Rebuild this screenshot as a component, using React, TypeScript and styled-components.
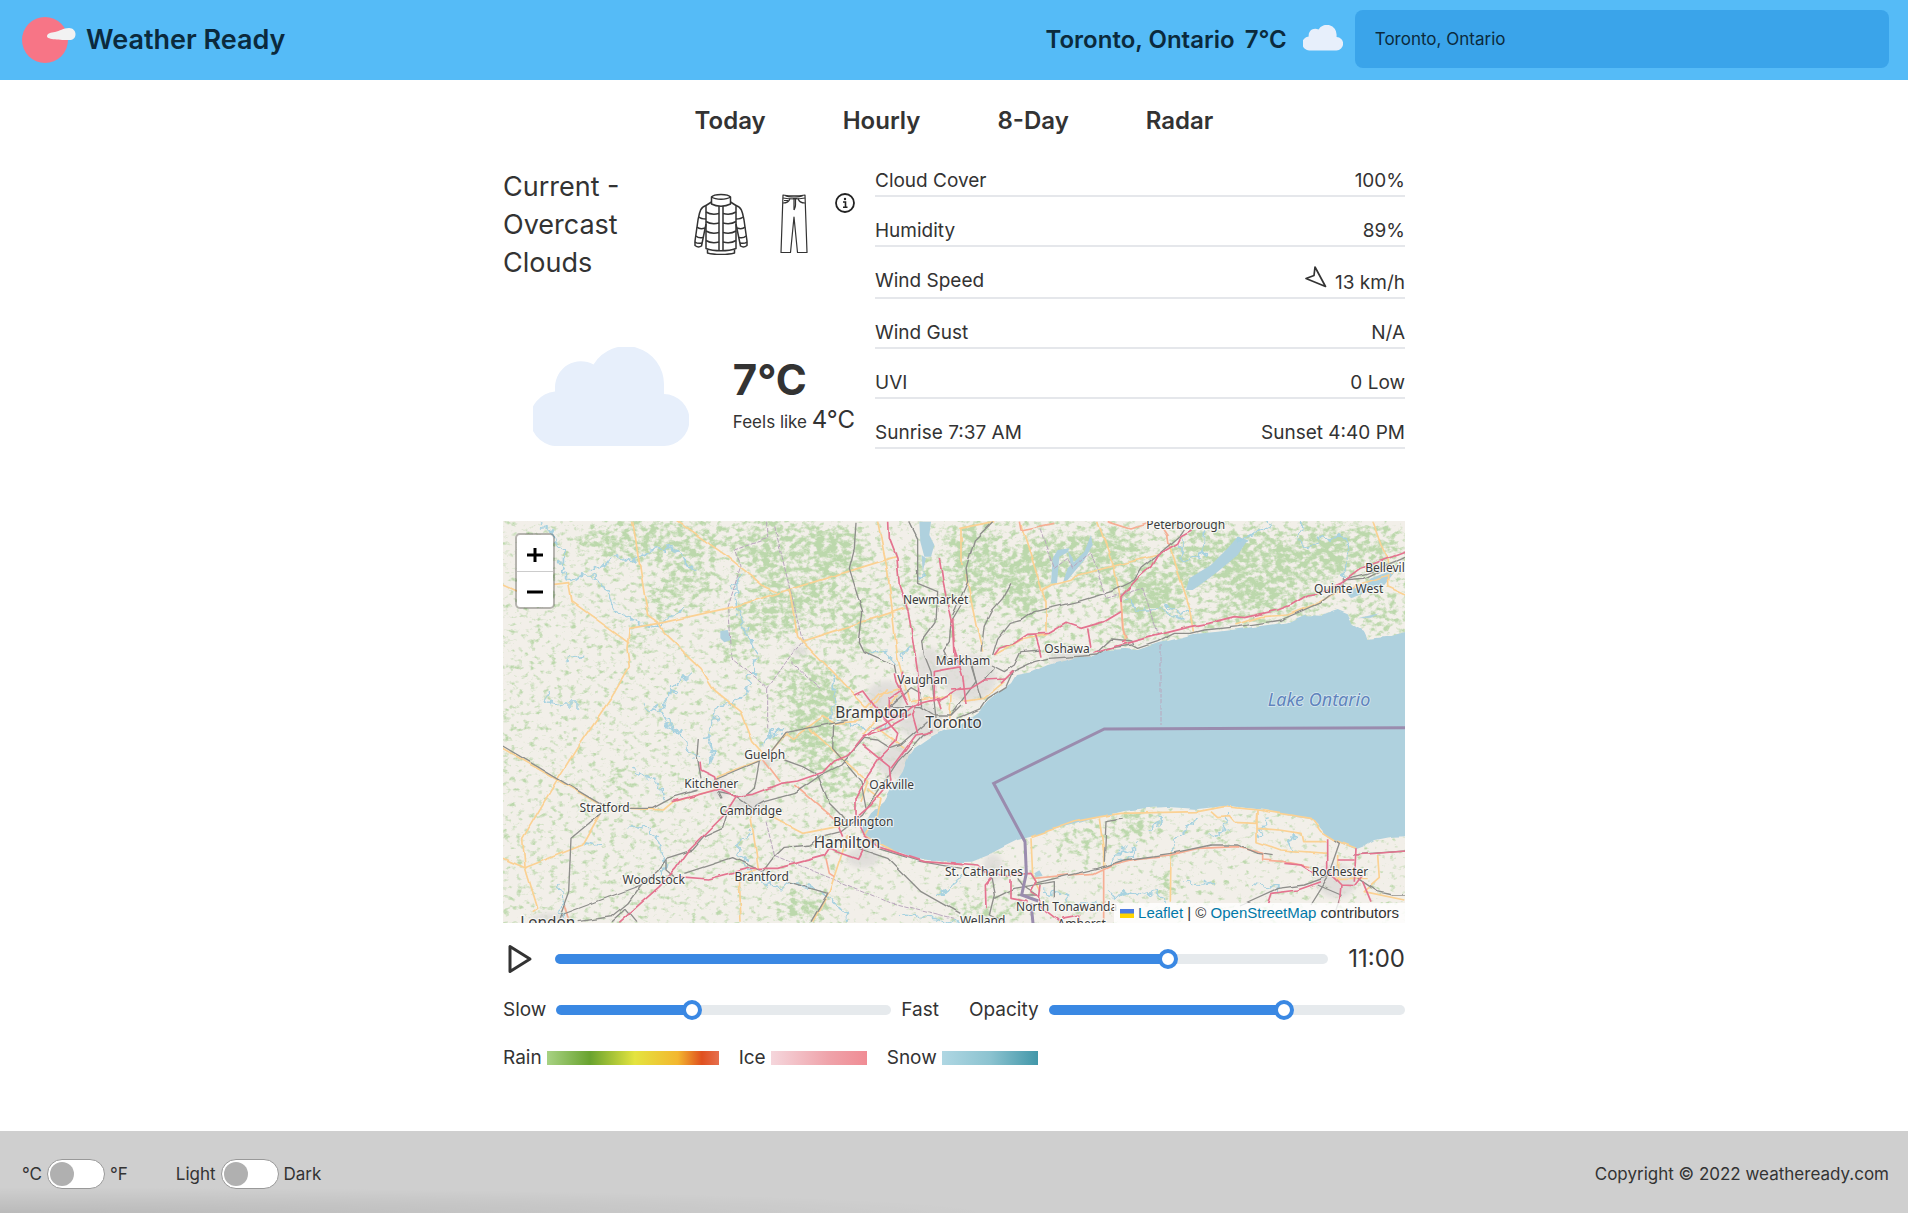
import React, { useState } from 'react';
import styled, { createGlobalStyle } from 'styled-components';

const GlobalStyle = createGlobalStyle`
  *, *::before, *::after { box-sizing: border-box; }
  body {
    margin: 0;
    background: #fff;
    color: #333;
    font-family: Inter, Roboto, "Liberation Sans", sans-serif;
    font-size: 19px;
    line-height: 24px;
  }
`;

const Page = styled.div`
  display: flex;
  flex-direction: column;
  min-height: 100vh;
`;

/* ---------- header ---------- */

const Header = styled.header`
  display: flex;
  align-items: center;
  justify-content: space-between;
  height: 80px;
  padding: 0 19px 0 20px;
  background: #55bbf7;
  color: #0b2a3d;
`;

const Brand = styled.a`
  display: flex;
  align-items: center;
  gap: 9px;
  color: inherit;
  font-size: 27px;
  font-weight: 600;
  line-height: 32px;
  text-decoration: none;
`;

const HeaderSide = styled.div`
  display: flex;
  align-items: center;
  gap: 10px;
`;

const HeaderCloud = styled.span`
  display: flex;
  padding: 0 2px 4px 6px;
`;

const Place = styled.span`
  font-size: 24px;
  font-weight: 600;
  line-height: 32px;
`;

const Search = styled.input`
  width: 28vw;
  height: 58px;
  margin-bottom: 2px;
  padding: 0 20px;
  border: 0;
  border-radius: 8px;
  background: #3aa4ea;
  color: #0b2a3d;
  font: inherit;
  font-size: 17px;
`;

/* ---------- main ---------- */

const Main = styled.main`
  flex: 1;
  width: 100%;
  max-width: 902px;
  margin: 0 auto;
`;

const Nav = styled.nav`
  display: flex;
  justify-content: center;
  gap: 77px;
  padding: 25px 0 10px;
`;

const NavLink = styled.a`
  color: inherit;
  font-size: 24px;
  font-weight: 600;
  line-height: 32px;
  text-decoration: none;
`;

const Summary = styled.section`
  display: grid;
  grid-template-columns: 352fr 530fr;
  gap: 20px;
  padding-bottom: 72px;
`;

const Current = styled.div`
  display: flex;
  flex-direction: column;
  justify-content: space-between;
  padding-top: 21px;
`;

const CurrentTop = styled.div`
  display: flex;
  align-items: flex-start;
  justify-content: space-between;
`;

const Condition = styled.h1`
  width: 150px;
  margin: 0;
  font-size: 27px;
  font-weight: 400;
  line-height: 38px;
`;

const Outfit = styled.div`
  display: flex;
  align-items: flex-start;
  gap: 27px;
  padding-top: 25px;
`;

const ClothingIcons = styled.div`
  display: flex;
  gap: 32px;
`;

const InfoButton = styled.button`
  display: flex;
  padding: 0;
  border: 0;
  background: none;
  color: inherit;
  cursor: pointer;
`;

const CurrentBottom = styled.div`
  display: flex;
  align-items: flex-end;
  justify-content: space-between;
  padding: 0 0 3px 30px;
`;

const Temps = styled.div`
  padding-bottom: 8px;
`;

const Temp = styled.div`
  font-size: 42px;
  font-weight: 700;
  line-height: 48px;
`;

const Feels = styled.div`
  font-size: 17px;
  line-height: 32px;
  white-space: nowrap;
`;

const FeelsTemp = styled.span`
  font-size: 24px;
`;

const Details = styled.table`
  width: 100%;
  border-collapse: collapse;
`;

const DetailRow = styled.tr`
  border-bottom: 2px solid #e5e7eb;
`;

const DetailName = styled.th`
  padding: 22px 0 2px;
  font-weight: 400;
  text-align: left;
  vertical-align: top;
`;

const DetailValue = styled.td`
  padding: 22px 0 2px;
  text-align: right;
`;

const Wind = styled.span`
  display: flex;
  align-items: flex-end;
  justify-content: flex-end;
  gap: 8px;
  height: 26px;
`;

const WindArrow = styled.svg`
  align-self: flex-start;
  margin-top: -3px;
`;

/* ---------- map ---------- */

const MapFrame = styled.section`
  position: relative;
  overflow: hidden;
  background: #f2efe9;
`;

const MapDrawing = styled.svg`
  display: block;
  width: 100%;
  height: auto;
`;

const ZoomBox = styled.div`
  position: absolute;
  top: 12px;
  left: 12px;
  display: flex;
  flex-direction: column;
  width: 40px;
  border: 2px solid rgba(0, 0, 0, 0.25);
  border-radius: 5px;
  background: #fff;
  background-clip: padding-box;
`;

const ZoomButton = styled.button`
  display: flex;
  align-items: center;
  justify-content: center;
  height: 36px;
  padding: 4px 0 0;
  border: 0;
  background: none;
  color: #000;
  cursor: pointer;
  & + & { border-top: 1px solid #ccc; }
`;

const Attribution = styled.div`
  position: absolute;
  right: 0;
  bottom: 0;
  display: flex;
  align-items: center;
  gap: 4px;
  padding: 0 6px;
  background: rgba(255, 255, 255, 0.8);
  font-family: "Liberation Sans", Arial, sans-serif;
  font-size: 15px;
  line-height: 20px;
  a { color: #0078a8; text-decoration: none; }
`;

/* ---------- controls ---------- */

const Controls = styled.section`
  display: flex;
  flex-direction: column;
  gap: 24px;
  padding: 21px 0 60px;
`;

const ControlRow = styled.div<{ $gap: number }>`
  display: flex;
  align-items: center;
  gap: ${(p) => p.$gap}px;
`;

const PlayButton = styled.button`
  display: flex;
  width: 32px;
  padding: 0 0 0 4px;
  border: 0;
  background: none;
  color: inherit;
  cursor: pointer;
`;

const Clock = styled.output`
  font-size: 24px;
  line-height: 30px;
`;

const SliderGroup = styled.div`
  flex: 1 1 0;
  display: flex;
  align-items: center;
  gap: 10px;
`;

const Range = styled.input<{ $fill: number }>`
  flex: 1;
  min-width: 0;
  height: 20px;
  margin: 0;
  appearance: none;
  background: transparent;
  cursor: pointer;
  &::-webkit-slider-runnable-track {
    height: 10px;
    border-radius: 5px;
    background: linear-gradient(
      to right,
      #3a88e3 ${(p) => p.$fill}%,
      #e6eaed ${(p) => p.$fill}%
    );
  }
  &::-webkit-slider-thumb {
    appearance: none;
    width: 20px;
    height: 20px;
    margin-top: -5px;
    border: 4px solid #3a88e3;
    border-radius: 50%;
    background: #fff;
  }
`;

const Legend = styled.div`
  display: flex;
  gap: 20px;
`;

const LegendItem = styled.span`
  display: flex;
  align-items: center;
  gap: 5px;
`;

const Swatch = styled.span<{ $width: number; $scale: string }>`
  width: ${(p) => p.$width}px;
  height: 14px;
  background: linear-gradient(to right, ${(p) => p.$scale});
`;

/* ---------- footer ---------- */

const Footer = styled.footer`
  display: flex;
  align-items: center;
  justify-content: space-between;
  height: 82px;
  padding: 3px 19px 0 22px;
  background:
    radial-gradient(ellipse 1000px 26px at 0 100%, rgba(0, 0, 0, 0.1), transparent),
    #cfcfcf;
  font-size: 17px;
`;

const Toggles = styled.div`
  display: flex;
  gap: 48px;
`;

const ToggleLabel = styled.label`
  display: flex;
  align-items: center;
  gap: 5px;
  cursor: pointer;
`;

const Toggle = styled.input`
  appearance: none;
  width: 58px;
  height: 30px;
  margin: 0;
  padding: 2px;
  border: 1px solid #999;
  border-radius: 15px;
  background: #fff;
  cursor: pointer;
  &::before {
    content: '';
    display: block;
    width: 24px;
    height: 24px;
    border-radius: 50%;
    background: #b0b0b0;
  }
  &:checked::before { margin-left: auto; }
`;

/* ---------- icons ---------- */

const Logo = () => (
  <svg width="57" height="50" viewBox="0 0 57 50" aria-hidden="true">
    <circle cx="25" cy="25" r="23" fill="#f77586" />
    <path
      d="M27 21.5C27 18 31 17.500 35 17C40 16 43 13 49 13C53 13 55.500 16 55.500 19C55.500 23 53 25 49.500 25C41 25 27 24.500 27 21.500Z"
      fill="#f2f2f2"
    />
  </svg>
);

const CloudIcon = ({ width }: { width: number }) => (
  <svg width={width} viewBox="0 0 156 99" aria-hidden="true">
    <path
      d="M27 99A27 27 0 0 1 22 44.500V40A26 26 0 0 1 60.500 17.500A38 38 0 0 1 131 38V47A26 26 0 0 1 130 99Z"
      fill="#e7effb"
    />
  </svg>
);

const JacketIcon = () => (
  <svg width="54" height="62" viewBox="0 0 54 62" fill="none" stroke="#333" strokeWidth="1.5" strokeLinejoin="round" aria-hidden="true">
    <path d="M17.500 4C20 0.500 34 0.500 36.500 4V11C31 14 23 14 17.500 11Z" />
    <path d="M17.500 4C22 7 32 7 36.500 4" />
    <path d="M17.500 9L12 12.500V55.500C20 58.500 34 58.500 42 55.500V12.500L36.500 9" />
    <path d="M13.500 56.500V60C20 62 34 62 40.500 60V56.500" />
    <path d="M12 12.500C6 14 5.500 20 4 27L1 48V52.500C3 54 6 54 7.500 53L12 31" />
    <path d="M42 12.500C48 14 48.500 20 50 27L53 48V52.500C51 54 48 54 46.500 53L42 31" />
    <path d="M1 49C3 50.500 6 50.500 8 50M2 43C4 45 7 45 9 44.500M3 34C5 36 8 36 11 35M5 24C7 26 9 26 12 26" />
    <path d="M53 49C51 50.500 48 50.500 46 50M52 43C50 45 47 45 45 44.500M51 34C49 36 46 36 43 35M49 24C47 26 45 26 42 26" />
    <path d="M25 13V57M29 13V57" />
    <path d="M12 19C16 21.500 21 21.500 25 20.500M12 28.500C16 31 21 31 25 30M12 38C16 40.500 21 40.500 25 39.500M12 47.500C16 50 21 50 25 49" />
    <path d="M42 19C38 21.500 33 21.500 29 20.500M42 28.500C38 31 33 31 29 30M42 38C38 40.500 33 40.500 29 39.500M42 47.500C38 50 33 50 29 49" />
  </svg>
);

const PantsIcon = () => (
  <svg width="28" height="62" viewBox="0 0 28 62" fill="none" stroke="#333" strokeWidth="1.2" strokeLinejoin="round" aria-hidden="true">
    <path d="M3 2C9 3 19 3 25 2L27 59.500H17.500L14 24L10.500 59.500H1L3 2Z" />
    <path d="M3 5C9 6 19 6 25 5M5 2.500C9 4.500 19 4.500 23 2.500" />
    <path d="M3 10C7 10 9 9 10 5.500M25 10C21 10 19 9 18 5.500M14 6V17M15.500 6V12C15.500 15 14.500 16 14 17M4 7.500H8M13 5.500H17" />
  </svg>
);

const InfoIcon = () => (
  <svg width="20" height="20" viewBox="0 0 20 20" aria-hidden="true">
    <circle cx="10" cy="10" r="9" fill="none" stroke="#222" strokeWidth="1.8" />
    <path d="M8 9H10.500V14M8 14.300H12.500" fill="none" stroke="#222" strokeWidth="1.6" />
    <circle cx="10" cy="6" r="1.200" fill="#222" />
  </svg>
);

/* ---------- map data ---------- */

type Line = [kind: keyof typeof lineStyle, d: string];
type Town = [name: string, x: number, y: number, size?: number];

const lineStyle = {
  river: { stroke: '#a8d2e0', strokeWidth: 5 },
  primary: { stroke: '#fbd193', strokeWidth: 5 },
  trunk: { stroke: '#f7ae94', strokeWidth: 5 },
  rail: { stroke: '#8e8e8b', strokeWidth: 4 },
  motorway: { stroke: '#e4738f', strokeWidth: 5 },
  county: { stroke: '#b9a6bd', strokeWidth: 3, strokeDasharray: '14 4' },
};

const westLines: Line[] = [
  ['river', 'M120 25L160 60L185 110L180 150L210 205L240 180L275 180L290 210L320 225L330 260L360 300L430 330L460 345L500 310L550 280'],
  ['river', 'M275 160L310 155L340 120L370 130L400 135L440 105L490 95L540 115L555 150L585 158'],
  ['river', 'M725 170L700 210L708 290L740 360L770 410L755 470L740 520L720 550L650 575L640 620L620 660L635 710L620 750'],
  ['river', 'M572 470L540 500L500 540L480 590L510 640L550 665L560 710L600 730'],
  ['river', 'M480 590L430 575M135 535L150 565L190 570L230 570M200 430L250 422'],
  ['river', 'M398 755L420 785L460 795L490 850M385 935L440 945L470 980L500 1050L480 1080'],
  ['river', 'M1250 190L1270 170M1195 430L1230 390M1105 415L1150 410L1190 450'],
  ['river', 'M1000 480L1000 560L985 610M850 640L800 660L780 690M1010 620L1080 635L1120 640L1180 640'],
  ['river', 'M760 950L720 970L715 1010L740 1060L800 1110L840 1115L900 1110L980 1140L1040 1210'],
  ['river', 'M170 1110L190 1160L180 1200M250 980L300 990M1200 1200L1260 1205L1380 1225M1380 1090L1310 1140'],
  ['county', 'M800 20L800 70L700 105L720 150L680 280L690 430L780 500L800 520L870 420L905 380M800 520L800 640M870 440L960 520M905 380L820 30M795 920L820 1020L1160 1160L1360 1210'],
  ['primary', 'M395 20L440 300L475 325L385 340L378 400L385 455L330 550L240 680L165 800L65 970L72 1055L110 1180L95 1190'],
  ['primary', 'M5 210L45 228M160 208L203 203L213 260L385 385M475 325L700 275L860 225L1040 170L1185 125'],
  ['primary', 'M530 20L680 125L790 215L825 230M475 325L490 355L600 460L640 525L720 590L755 680L790 720'],
  ['primary', 'M865 225L890 365L1060 540L1100 580M900 380L1210 280M1130 20L1160 170L1190 430L1225 560'],
  ['primary', 'M5 1030L72 1058L245 990L295 900M5 700L290 865M390 880L490 885L520 860L640 825L650 785L780 735'],
  ['primary', 'M780 890L905 955L1010 935L1030 920M750 905L772 1060L715 1090L720 1220M1040 960L985 1130L935 1220'],
  ['primary', 'M810 710L855 655L875 670L965 605L1000 625L1060 620L1130 540L1200 520M925 640L1100 800L1080 860M1100 820L1140 850L1130 900L1090 960L1200 1020'],
  ['primary', 'M1085 660L1190 540M1130 640L1210 700M1110 580L1160 520M1230 560L1350 540L1345 640'],
  ['trunk', 'M785 735L835 800M880 810L960 880L1020 930M975 1030L985 1075L1000 1085M190 1170L205 1222'],
  ['rail', 'M5 693L300 868M300 895L210 970L203 1130L170 1220M385 880L455 880L520 845L590 825M592 672L588 720L600 790'],
  ['rail', 'M640 795L775 738L760 820L730 845M660 850L650 830L700 840L755 880L790 860L880 835L960 780L1020 750L1090 670L1130 675L1170 700L1200 690L1280 620'],
  ['rail', 'M850 735L905 755L950 780L985 865L1020 900L1035 920M810 710L855 652L995 625L1040 615M998 630L995 700L1080 800L1095 880'],
  ['rail', 'M1065 20L1060 100L1045 160L1085 290L1075 380L1090 410L1180 450L1185 475M1225 20L1250 70L1250 205L1310 230L1305 320L1265 375L1270 420L1290 470L1305 610'],
  ['rail', 'M1380 270L1350 320L1345 380L1325 410L1345 450M1165 575L1260 575L1300 600L1350 600L1380 570M1165 575L1230 518L1260 535L1265 575'],
  ['rail', 'M180 1200L420 1110L470 1065L495 1030L575 1005L610 965L665 940L680 890M230 1220L330 1205L380 1165L420 1110M550 1075L695 1028L785 1070L815 1030L850 997L930 990L960 965L1020 950L1085 900L1190 740L1265 660L1295 645'],
  ['rail', 'M495 1030L495 1065L520 1085M1070 1000L1160 1030L1260 1130L1375 1195M860 1100L980 1135L930 1220M1130 1000L1260 1040L1380 1060M330 1220L375 1180L408 1220'],
  ['motorway', 'M1163 20L1165 70L1188 130L1195 210L1222 290L1250 470L1255 570M1315 130L1325 195L1355 340L1360 440'],
  ['motorway', 'M355 1222L475 1115L525 1060L565 1005L610 960L670 900L705 845L755 838L840 805L890 798L970 770L1000 738L1045 720L1085 670L1130 635L1210 595L1240 570L1320 550L1380 515'],
  ['motorway', 'M515 860L655 822L705 845M655 822L640 785L600 765L597 740M530 1085L620 1092L740 1060L830 1060L970 1022L985 1000L1070 1030L1085 1000'],
  ['motorway', 'M1060 540L1085 528L1120 575L1190 655L1185 680L1130 735L1100 780L1065 850L1065 905L1090 960L1130 995L1270 1040L1380 1048'],
  ['motorway', 'M1085 690L1165 755L1170 800L1110 870L1070 905M1170 760L1245 660L1295 650M1250 655L1235 600L1245 570M1205 470L1195 530L1165 550L1165 600L1220 605M1300 560L1300 470L1380 455'],
  ['motorway', 'M1085 665L1160 640L1230 600M1310 545L1320 580M1180 475L1185 500L1220 570M1010 930L1025 965'],
];

const eastLines: Line[] = [
  ['river', 'M1050 20L1045 80L1070 100L1120 65L1180 70L1190 120L1175 180M760 55L760 115L690 135L690 60M960 20L900 60L860 80'],
  ['river', 'M520 255L560 285L620 285L700 312M640 260L655 285L715 295M700 1100L740 1110L795 1100M615 910L640 915L590 950M740 910L690 960L660 970L660 1020M830 890L820 950L770 965M920 960L960 905M1030 950L1010 1005'],
  ['river', 'M480 1050L500 1010L555 995L545 1025L510 1040M465 1130L490 1145L530 1130L580 1140L620 1130L640 1160M270 1130L330 1140L370 1170L450 1160M910 1110L990 1120'],
  ['county', 'M270 40L310 160L350 130L365 160L420 110L465 250L575 220L620 360M630 390V630'],
  ['primary', 'M45 180L75 330L95 410M30 150L30 40L130 20M210 30L265 200L285 260L285 350M440 20L490 160L510 260L520 380M275 225L300 210L365 195L380 180L620 120'],
  ['primary', 'M655 90L720 290L730 350M130 420L210 375L290 358M850 330L930 305L1010 300L1100 265L1150 235L1310 180L1310 215L1365 240M1265 20L1290 90L1310 130L1320 180'],
  ['primary', 'M240 965L300 945L370 920L450 905L510 895L740 890L820 875L920 885L1080 910L1110 950L1150 975L1215 1000M780 890L800 908L835 905L850 922L915 925L918 885L918 980L990 1005L1130 1015M918 940L985 945L1050 955L1055 980L1130 980'],
  ['primary', 'M240 970L245 1080L270 1130M445 910L458 1010L458 1060M660 1010L658 1160M30 560L100 550L160 500M1280 1020L1285 1090L1240 1130L1360 1155M1150 1090L1250 1090M1160 1020L1160 1100'],
  ['trunk', 'M205 20L210 45L310 25M470 20L540 42L590 25M630 30L650 60L655 95M510 250L515 340L525 370M250 1090L350 1080L430 1075L480 1050L560 1030L660 1020L740 1000L860 995L935 1015L935 1035L1000 1040L1075 1055M458 1060L458 1222'],
  ['rail', 'M125 20L70 75L45 160L50 200L5 300M180 205L155 250L120 290L100 330L90 410M125 420L140 370L175 325L215 315L250 290L380 260L480 230L550 195L570 160L620 120L690 60L700 45'],
  ['rail', 'M0 600L30 560L75 500L60 440M20 610L90 580L110 550L165 515L185 470L250 440L290 430L440 420L470 400L540 390L560 400L620 380L670 355L720 355L760 345L860 335L990 315L1110 262L1150 230L1190 190L1250 175L1365 125'],
  ['rail', 'M440 410L480 372L540 378L545 390M120 450L160 470L190 450L210 410L270 405M95 500L130 460M60 450L90 550M1175 195L1240 190L1300 160'],
  ['rail', 'M250 1105L440 1060L520 1035L660 1015L780 990L860 990L920 1015L965 1022M460 1040L465 920L512 912M870 1170L980 1120L1060 1110L1130 1085L1165 985L1150 975M1220 1090L1280 1130L1325 1140L1365 1140M1130 1090L1080 1170M1210 1020L1260 1015L1365 1008'],
  ['rail', 'M120 1090L130 1140L115 1200L160 1222M130 1150L190 1120L310 1100L310 1150M200 1090L215 1110L260 1140L200 1140M1100 1110L1170 1140L1150 1200'],
  ['motorway', 'M5 310L10 400L35 480L45 570M0 525L60 520L100 495L165 492M130 420L145 400L190 385L230 358L295 355L345 325L390 340L460 320L510 290'],
  ['motorway', 'M430 415L490 395L600 365L720 335L770 325L850 305L880 308L980 285L1020 270L1070 240L1100 235L1170 205L1230 160L1365 110M510 380L522 375M253 358L265 400L270 425M410 340L420 400M722 48L690 65L680 85L620 120L600 155L555 195L510 245L510 260M150 505L185 470'],
  ['motorway', 'M0 1043L80 1050L100 1070L170 1080L240 1075L255 1100L240 1130L265 1145L275 1180L330 1222M105 1180L103 1110L120 1090M180 1090L180 1150L230 1160M270 1110L265 1150M390 1222L385 1200L330 1210'],
  ['motorway', 'M1130 970L1130 1070L1170 1110L1210 1112L1235 1080M1215 1000L1210 1100M1090 1075L1050 1050L1000 1045M950 1165L960 1135L1040 1125L1110 1100M1210 1020L1365 1008M1235 1100L1260 1160M1160 1035L1210 1035M1170 1110L1165 1165'],
];

const westTowns: Town[] = [
  ['Newmarket', 1304, 268],
  ['Markham', 1386, 451],
  ['Vaughan', 1264, 508],
  ['Brampton', 1112, 610, 46],
  ['Toronto', 1358, 638, 46],
  ['Guelph', 791, 733],
  ['Kitchener', 631, 818],
  ['Oakville', 1172, 822],
  ['Stratford', 311, 892],
  ['Cambridge', 749, 901],
  ['Burlington', 1087, 933],
  ['Hamilton', 1038, 998, 46],
  ['Woodstock', 458, 1108],
  ['Brantford', 782, 1098],
  ['London', 140, 1238, 46],
];

const eastTowns: Town[] = [
  ['Peterborough', 704, 43],
  ['Bellevil', 1302, 172],
  ['Quinte West', 1193, 234],
  ['Oshawa', 348, 414],
  ['St. Catharines', 99, 1083],
  ['Rochester', 1167, 1082],
  ['North Tonawanda', 347, 1188],
  ['Welland', 95, 1231],
  ['Amherst', 392, 1240],
];

/* cx, cy, rx, ry, density */
const forests: [number, number, number, number, number][] = [
  [500, 600, 900, 700, 0.08], [2000, 200, 900, 260, 0.12],
  [450, 60, 230, 60, 0.42], [560, 180, 90, 70, 0.35], [840, 60, 160, 60, 0.4], [1010, 90, 90, 70, 0.5],
  [780, 120, 60, 40, 0.45], [880, 190, 130, 60, 0.38], [790, 290, 110, 60, 0.42], [1000, 260, 160, 70, 0.25],
  [1050, 350, 60, 50, 0.42], [690, 370, 40, 50, 0.42], [900, 480, 90, 90, 0.28], [930, 560, 80, 90, 0.3],
  [960, 680, 90, 90, 0.36], [900, 640, 60, 60, 0.3], [340, 780, 30, 30, 0.45], [900, 1160, 80, 40, 0.45],
  [470, 250, 60, 60, 0.25], [380, 360, 60, 40, 0.2], [1000, 800, 70, 60, 0.25], [1000, 500, 50, 70, 0.3],
  [1370, 100, 40, 160, 0.4], [1440, 120, 60, 120, 0.4], [1560, 180, 70, 110, 0.5], [1640, 100, 80, 60, 0.4],
  [1750, 130, 90, 80, 0.25], [1850, 120, 100, 90, 0.3], [1930, 240, 90, 60, 0.5], [2000, 180, 90, 70, 0.3],
  [1790, 60, 100, 40, 0.35], [2120, 110, 110, 90, 0.38], [2260, 140, 110, 110, 0.42], [2420, 110, 110, 80, 0.42],
  [2560, 80, 140, 70, 0.4], [2300, 240, 160, 50, 0.3], [2150, 290, 100, 40, 0.25], [1900, 330, 120, 40, 0.25],
  [2640, 280, 90, 60, 0.25], [1600, 380, 120, 30, 0.15], [1900, 910, 70, 50, 0.45], [1740, 960, 90, 60, 0.3],
  [1990, 1090, 45, 30, 0.5], [2150, 950, 60, 40, 0.2], [1450, 1170, 120, 50, 0.3],
  [1240, 170, 30, 80, 0.35], [700, 990, 80, 50, 0.1],
];

const urban: [number, number, number, number][] = [
  [1150, 530, 60, 50], [1280, 440, 40, 60], [1400, 470, 80, 70], [1250, 600, 70, 50], [1700, 410, 60, 30],
  [740, 850, 50, 30], [650, 800, 30, 30], [790, 715, 26, 20], [1080, 1010, 50, 30], [140, 1200, 60, 24],
  [1180, 720, 60, 50], [2500, 1080, 60, 50], [890, 390, 24, 16], [1470, 1040, 30, 40],
];

const Lines = ({ lines }: { lines: Line[] }) => (
  <g fill="none" strokeLinejoin="round">
    {lines.map(([kind, d]) => (
      <path key={d} d={d} {...lineStyle[kind]} filter={kind === 'river' ? 'url(#meander)' : 'url(#bend)'} />
    ))}
  </g>
);

const Towns = ({ towns }: { towns: Town[] }) => (
  <g
    fontFamily='"Noto Sans", sans-serif'
    textAnchor="middle"
    fill="#3c3c3c"
    stroke="rgba(255,255,255,0.7)"
    strokeWidth="7"
    paintOrder="stroke"
    strokeLinejoin="round"
  >
    {towns.map(([name, x, y, size = 36]) => (
      <text key={name} x={x} y={y} fontSize={size}>{name}</text>
    ))}
  </g>
);

const shore =
  'M-265 935L-240 895L-200 860L-175 815L-145 770L-130 730L-110 700L-60 665L-20 645L20 640L50 615L90 585L110 560L150 525L180 505L195 480L240 472L290 450L340 437L380 426L430 425L470 405L520 402L560 405L620 385L680 370L730 357L800 350L880 340L950 330L1010 322L1060 300L1110 302L1160 285L1190 298L1205 330L1240 350L1250 372L1310 365L1420 335V962L1320 965L1270 975L1235 995L1215 1003L1170 985L1130 965L1100 930L1080 912L1030 905L940 885L830 872L740 882L650 876L580 880L520 888L450 905L380 925L300 945L240 965L200 975L150 1000L110 1020L60 1040L0 1042L-70 1035L-130 1020L-190 1000L-240 985L-265 960Z';

const RadarMap = () => (
  <MapDrawing viewBox="0 0 2706 1206" role="img" aria-label="Map of Toronto and Lake Ontario">
    <defs>
      <filter id="woods" filterUnits="userSpaceOnUse" x="0" y="0" width="2706" height="1206" colorInterpolationFilters="sRGB">
        <feGaussianBlur in="SourceGraphic" stdDeviation="22" result="density" />
        <feTurbulence type="fractalNoise" baseFrequency="0.05 0.065" numOctaves="3" seed="8" />
        <feColorMatrix values="0 0 0 0 0  0 0 0 0 0  0 0 0 0 0  1 0 0 0 0" result="grain" />
        <feComposite in="grain" in2="density" operator="arithmetic" k2="1" k3="0.5" />
        <feComponentTransfer result="patches">
          <feFuncA type="linear" slope="4" intercept="-2.350" />
        </feComponentTransfer>
        <feFlood floodColor="#bcd8ac" />
        <feComposite in2="patches" operator="in" />
      </filter>
      <filter id="meander" filterUnits="userSpaceOnUse" x="-300" y="0" width="3040" height="1260">
        <feTurbulence type="fractalNoise" baseFrequency="0.04" numOctaves="2" seed="3" />
        <feDisplacementMap in="SourceGraphic" scale="44" xChannelSelector="R" yChannelSelector="G" />
      </filter>
      <filter id="bend" filterUnits="userSpaceOnUse" x="-300" y="0" width="3040" height="1260">
        <feTurbulence type="fractalNoise" baseFrequency="0.02" numOctaves="1" seed="5" />
        <feDisplacementMap in="SourceGraphic" scale="12" xChannelSelector="R" yChannelSelector="G" />
      </filter>
      <filter id="soft"><feGaussianBlur stdDeviation="8" /></filter>
    </defs>
    <rect width="2706" height="1206" fill="#f2efe9" />
    <g filter="url(#woods)">
      {forests.map(([cx, cy, rx, ry, density], i) => (
        <ellipse key={i} cx={cx} cy={cy} rx={rx} ry={ry} fillOpacity={density} />
      ))}
    </g>
    <g fill="#dddbd8" filter="url(#soft)" opacity="0.8">
      {urban.map(([cx, cy, rx, ry], i) => (
        <ellipse key={i} cx={cx} cy={cy} rx={rx} ry={ry} />
      ))}
    </g>
    <g transform="translate(1344 -18)" fill="#afd1de">
      <path d={shore} filter="url(#bend)" />
      <path d="M705 225L715 190L780 150L830 100L860 65L890 75L860 120L800 170L760 200L725 225Z" />
      <path d="M300 205L305 130L320 105L355 100L350 112L325 125L322 160L318 205ZM335 205L350 160L370 140L400 110L420 60L425 90L400 135L370 170L350 195ZM350 105L365 130L372 160L360 150ZM1180 225L1230 215L1260 190L1340 160L1300 210L1200 250ZM1220 310L1285 295L1260 308Z" />
      <path d="M250 1075L265 1066L275 1082L255 1085Z" />
    </g>
    <g transform="translate(-6 -18)" fill="#afd1de">
      <path d="M1255 20H1290L1285 60L1300 90L1290 125L1270 125L1258 80ZM1262 120L1275 130L1265 170ZM658 348L680 345L690 375L670 382L658 370Z" />
    </g>
    <g transform="translate(-6 -18)"><Lines lines={westLines} /></g>
    <g transform="translate(1344 -18)">
      <Lines lines={eastLines} />
      <path
        d="M1370 638L460 642L128 805L222 980L226 1075L212 1140L262 1158M240 1165L246 1225"
        fill="none"
        stroke="#9a8cae"
        strokeWidth="9"
      />
    </g>
    <g transform="translate(-6 -18)"><Towns towns={westTowns} /></g>
    <g transform="translate(1344 -18)">
      <Towns towns={eastTowns} />
      <text
        x="1104"
        y="573"
        fontSize="54"
        fontFamily='"Noto Sans", sans-serif'
        fontStyle="italic"
        textAnchor="middle"
        fill="#6084bd"
        stroke="rgba(255,255,255,0.5)"
        strokeWidth="5"
        paintOrder="stroke"
      >
        Lake Ontario
      </text>
    </g>
  </MapDrawing>
);

/* ---------- app ---------- */

type SliderProps = { id?: string; label?: string; initial: number };

const Slider = ({ id, label, initial }: SliderProps) => {
  const [value, setValue] = useState(initial);
  return (
    <Range
      id={id}
      aria-label={label}
      type="range"
      min={0}
      max={100}
      value={value}
      $fill={value}
      onChange={(e) => setValue(Number(e.target.value))}
    />
  );
};

const windSpeed = (
  <Wind>
    <WindArrow width="22" height="22" viewBox="0 0 22 22" fill="none" stroke="#333" strokeWidth="1.7" strokeLinejoin="round" aria-hidden="true">
      <path d="M1 12.500L9 9.500L10 1L20.500 20.500Z" />
    </WindArrow>
    13 km/h
  </Wind>
);

const details: [string, React.ReactNode][] = [
  ['Cloud Cover', '100%'],
  ['Humidity', '89%'],
  ['Wind Speed', windSpeed],
  ['Wind Gust', 'N/A'],
  ['UVI', '0 Low'],
  ['Sunrise 7:37 AM', 'Sunset 4:40 PM'],
];

const legend = [
  { name: 'Rain', width: 172, scale: '#a8d283, #69a32f 25%, #e4e43f 51%, #f3b72f 76%, #e0501f 90%, #e66f4e' },
  { name: 'Ice', width: 96, scale: '#f5d6dc, #efa3aa 60%, #f08c94' },
  { name: 'Snow', width: 96, scale: '#afd7e3, #8cc3d0 50%, #4297a9' },
];

export default function App() {
  return (
    <Page>
      <GlobalStyle />
      <Header>
        <Brand href="#">
          <Logo />
          Weather Ready
        </Brand>
        <HeaderSide>
          <Place>Toronto, Ontario</Place>
          <Place>7°C</Place>
          <HeaderCloud><CloudIcon width={40} /></HeaderCloud>
          <Search type="text" aria-label="Location" defaultValue="Toronto, Ontario" />
        </HeaderSide>
      </Header>

      <Main>
        <Nav>
          {['Today', 'Hourly', '8-Day', 'Radar'].map((name) => (
            <NavLink key={name} href="#">{name}</NavLink>
          ))}
        </Nav>

        <Summary>
          <Current>
            <CurrentTop>
              <Condition>Current - Overcast Clouds</Condition>
              <Outfit>
                <ClothingIcons>
                  <JacketIcon />
                  <PantsIcon />
                </ClothingIcons>
                <InfoButton aria-label="Clothing information"><InfoIcon /></InfoButton>
              </Outfit>
            </CurrentTop>
            <CurrentBottom>
              <CloudIcon width={156} />
              <Temps>
                <Temp>7°C</Temp>
                <Feels>Feels like <FeelsTemp>4°C</FeelsTemp></Feels>
              </Temps>
            </CurrentBottom>
          </Current>
          <Details>
            <tbody>
              {details.map(([name, value]) => (
                <DetailRow key={name}>
                  <DetailName scope="row">{name}</DetailName>
                  <DetailValue>{value}</DetailValue>
                </DetailRow>
              ))}
            </tbody>
          </Details>
        </Summary>

        <MapFrame>
          <RadarMap />
          <ZoomBox>
            <ZoomButton aria-label="Zoom in">
              <svg width="16" height="16" viewBox="0 0 16 16"><path d="M8 1V15M0 8H16" stroke="#000" strokeWidth="3" /></svg>
            </ZoomButton>
            <ZoomButton aria-label="Zoom out">
              <svg width="16" height="16" viewBox="0 0 16 16"><path d="M0 8H16" stroke="#000" strokeWidth="3" /></svg>
            </ZoomButton>
          </ZoomBox>
          <Attribution>
            <svg width="14" height="9" viewBox="0 0 14 9" aria-hidden="true">
              <path fill="#4c7be1" d="M0 0h14v5H0z" />
              <path fill="#ffd500" d="M0 4.500h14V9H0z" />
            </svg>
            <span>
              <a href="#">Leaflet</a> | © <a href="#">OpenStreetMap</a> contributors
            </span>
          </Attribution>
        </MapFrame>

        <Controls>
          <ControlRow $gap={20}>
            <PlayButton aria-label="Play">
              <svg width="26" height="30" viewBox="0 0 26 30" fill="none" stroke="#333" strokeWidth="3" strokeLinejoin="round" aria-hidden="true">
                <path d="M3 2.500V27.500L23 15Z" />
              </svg>
            </PlayButton>
            <Slider label="Time" initial={80} />
            <Clock>11:00</Clock>
          </ControlRow>
          <ControlRow $gap={30}>
            <SliderGroup>
              <label htmlFor="speed">Slow</label>
              <Slider id="speed" initial={40} />
              <label htmlFor="speed">Fast</label>
            </SliderGroup>
            <SliderGroup>
              <label htmlFor="opacity">Opacity</label>
              <Slider id="opacity" initial={67} />
            </SliderGroup>
          </ControlRow>
          <Legend>
            {legend.map(({ name, width, scale }) => (
              <LegendItem key={name}>
                {name}
                <Swatch $width={width} $scale={scale} />
              </LegendItem>
            ))}
          </Legend>
        </Controls>
      </Main>

      <Footer>
        <Toggles>
          <ToggleLabel>°C <Toggle type="checkbox" /> °F</ToggleLabel>
          <ToggleLabel>Light <Toggle type="checkbox" /> Dark</ToggleLabel>
        </Toggles>
        <span>Copyright © 2022 weatheready.com</span>
      </Footer>
    </Page>
  );
}
